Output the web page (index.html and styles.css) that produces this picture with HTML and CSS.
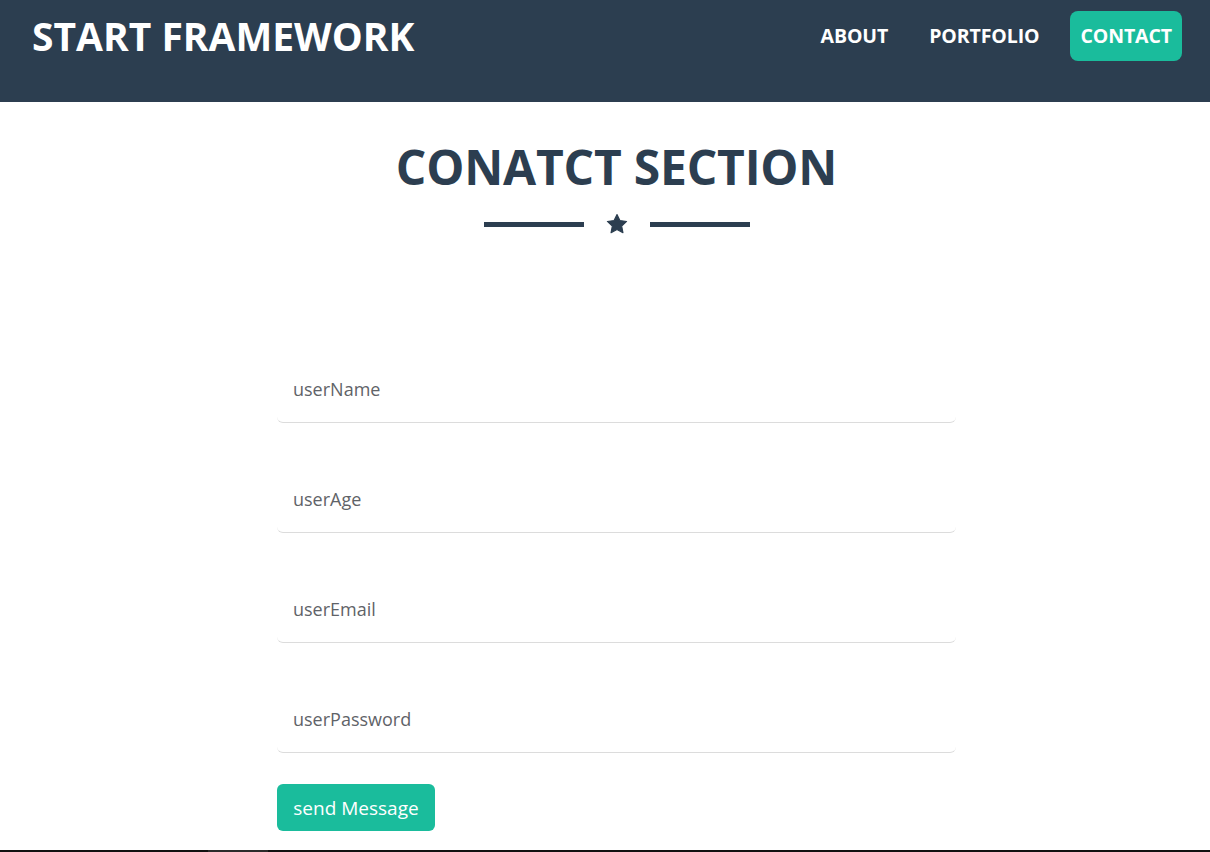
FILE: index.html
```html
<!DOCTYPE html>
<html lang="en">
<head>
<meta charset="utf-8">
<title>Start Framework</title>
<link rel="stylesheet" href="styles.css">
</head>
<body>
<header class="topbar">
  <a class="brand" href="#">START FRAMEWORK</a>
  <nav class="nav">
    <a class="nav-link" href="#">ABOUT</a>
    <a class="nav-link" href="#">PORTFOLIO</a>
    <a class="nav-link active" href="#">CONTACT</a>
  </nav>
</header>
<main class="contact">
  <h2 class="title">CONATCT SECTION</h2>
  <div class="divider">
    <span class="line"></span>
    <svg class="star" viewBox="0 0 24 24" width="22" height="22"><path d="M12 1.6l3.2 6.7 7.3.9-5.4 5 1.4 7.3L12 17.9l-6.5 3.6 1.4-7.3-5.4-5 7.3-.9z" fill="#2c3e50" stroke="#2c3e50" stroke-width="1.2" stroke-linejoin="round"/></svg>
    <span class="line"></span>
  </div>
  <form class="form">
    <input class="field" type="text" placeholder="userName">
    <input class="field" type="text" placeholder="userAge">
    <input class="field" type="email" placeholder="userEmail">
    <input class="field" type="password" placeholder="userPassword">
    <button class="send" type="button">send Message</button>
  </form>
</main>
<div class="scrollbar"><span class="thumb"></span></div>
</body>
</html>
```
FILE: styles.css
```css
* { box-sizing: border-box; }
html, body { margin: 0; padding: 0; }
body {
  font-family: "Open Sans", "Noto Sans", sans-serif;
  background: #fff;
  color: #2c3e50;
}
.topbar {
  height: 102px;
  background: #2c3e50;
  display: flex;
  align-items: flex-start;
  justify-content: space-between;
  padding: 11px 28px 0 32px;
}
.brand {
  color: #fff;
  text-decoration: none;
  font-weight: 700;
  font-size: 39px;
  line-height: 50px;
  letter-spacing: 0;
}
.nav {
  display: flex;
  gap: 21px;
}
.nav-link {
  color: #fff;
  text-decoration: none;
  font-weight: 700;
  font-size: 19.5px;
  line-height: 50px;
  height: 50px;
  padding: 0 10px;
  border-radius: 8px;
  letter-spacing: -0.1px;
}
.nav-link.active { background: #1abc9c; }
.contact {
  padding-left: 23px;
  display: flex;
  flex-direction: column;
  align-items: center;
}
.title {
  margin: 35px 0 0;
  font-size: 48px;
  line-height: 60px;
  font-weight: 700;
  color: #2c3e50;
  letter-spacing: -0.2px;
}
.divider {
  margin-top: 16px;
  display: flex;
  align-items: center;
  gap: 22px;
  height: 22px;
}
.line {
  width: 100px;
  height: 5px;
  background: #2c3e50;
}
.star { display: block; }
.form {
  width: 679px;
  margin-top: 120px;
  display: flex;
  flex-direction: column;
  gap: 42px;
}
.field {
  display: block;
  width: 100%;
  height: 68px;
  border: none;
  border-bottom: 1px solid #dcdcdc;
  border-radius: 6px;
  padding: 0 16px;
  font-family: "Open Sans", "Noto Sans", sans-serif;
  font-size: 18px;
  color: #495057;
  outline: none;
}
.field::placeholder { color: #5f6368; }
.send {
  align-self: flex-start;
  margin-top: -11px;
  width: 158px;
  height: 47px;
  border: none;
  border-radius: 6px;
  background: #1abc9c;
  color: #fff;
  font-family: "Open Sans", "Noto Sans", sans-serif;
  font-size: 19px;
  padding: 0;
}
.scrollbar {
  margin-top: 19px;
  height: 3px;
  background: #111;
  display: flex;
}
.thumb {
  margin-left: 208px;
  width: 60px;
  background: #2b2b2b;
}
```
